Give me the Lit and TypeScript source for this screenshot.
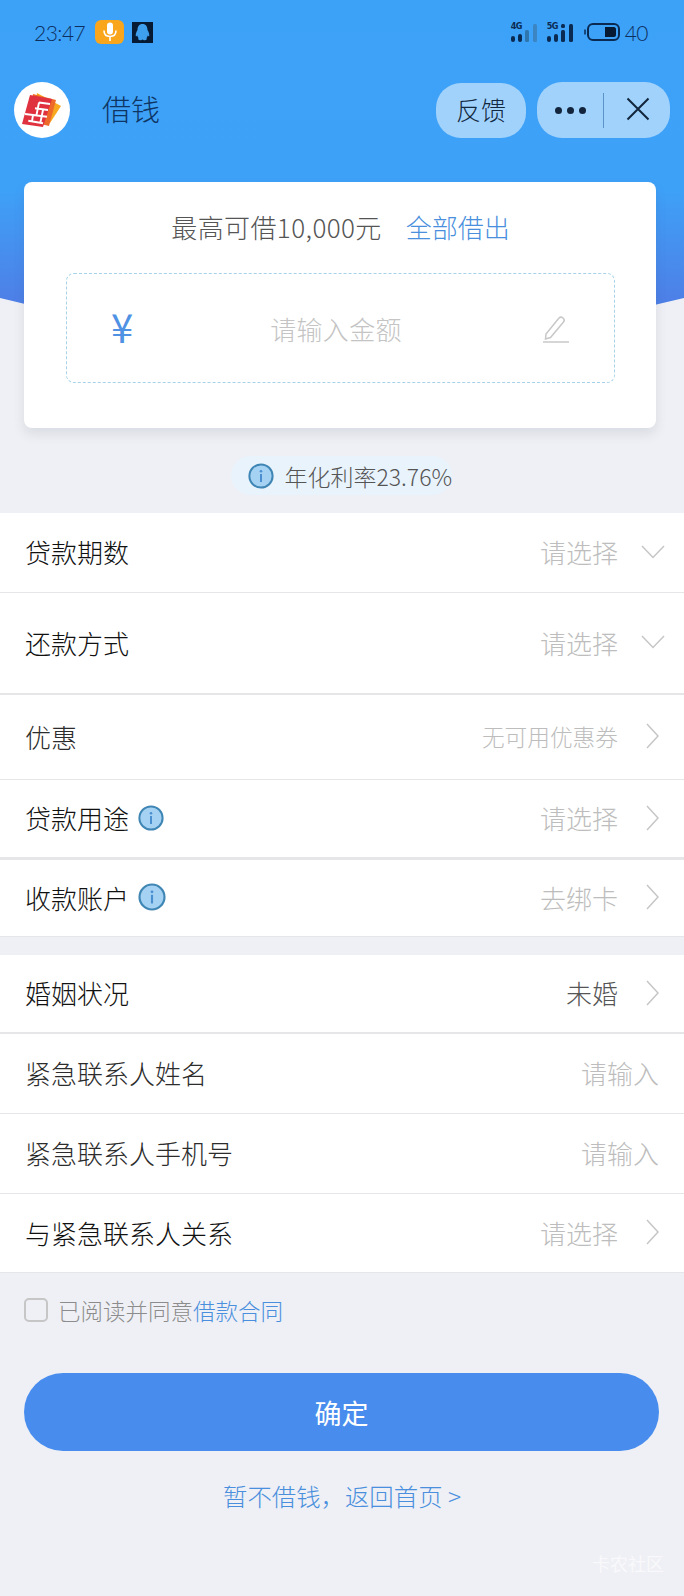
import { LitElement, html, css, svg } from 'lit'
import { customElement } from 'lit/decorators.js'

type Row = {
  label: string
  value?: string
  tone?: 'hint' | 'set'
  small?: boolean
  soft?: boolean
  info?: 'sm' | 'lg'
  icon?: 'down' | 'right'
  size: string
}

const loanRows: Row[] = [
  { label: '贷款期数', value: '请选择', icon: 'down', size: 'r80' },
  { label: '还款方式', value: '请选择', icon: 'down', size: 'r102' },
  { label: '优惠', value: '无可用优惠券', small: true, soft: true, icon: 'right', size: 'r85' },
  { label: '贷款用途', value: '请选择', info: 'sm', icon: 'right', size: 'r80 thick' },
  { label: '收款账户', value: '去绑卡', info: 'lg', icon: 'right', size: 'r77' },
]

const contactRows: Row[] = [
  { label: '婚姻状况', value: '未婚', tone: 'set', icon: 'right', size: 'r79 mid' },
  { label: '紧急联系人姓名', value: '请输入', size: 'r80', soft: true },
  { label: '紧急联系人手机号', value: '请输入', size: 'r80', soft: true },
  { label: '与紧急联系人关系', value: '请选择', icon: 'right', size: 'r79' },
]

const infoIcon = (size: number) => html`
  <svg class="info" width=${size} height=${size} viewBox="0 0 26 26">
    <circle cx="13" cy="13" r="11.6" fill="#a5d2f3" stroke="#3f86b5" stroke-width="2"></circle>
    <circle cx="13" cy="8.2" r="1.3" fill="#4a8fd0"></circle>
    <rect x="12" y="11" width="2" height="8" fill="#4a8fd0"></rect>
  </svg>
`

const signal = (bars: string[], dot: boolean) => svg`
  <rect x="0" y="12" width="4" height="6" rx="2" fill=${bars[0]}></rect>
  <rect x="7" y="10" width="4" height="8" rx="2" fill=${bars[1]}></rect>
  <rect x="14" y="6" width="4" height="12" rx="1.5" fill=${bars[2]}></rect>
  ${dot ? svg`<rect x="14" y="0" width="4" height="4" rx="1.5" fill=${bars[2]}></rect>` : ''}
  <rect x="22" y="0" width="4" height="18" rx="1.5" fill=${bars[3]}></rect>
`

@customElement('app-root')
export class AppRoot extends LitElement {
  static styles = css`
    :host {
      display: block;
      position: relative;
      min-height: 1596px;
      background: #eff0f5;
      overflow: hidden;
      font-family: 'Noto Sans CJK SC', 'Noto Sans', sans-serif;
      color: #333;
    }

    .hero-bg {
      position: absolute;
      left: 0;
      top: 0;
      width: 684px;
      height: 345px;
      background: linear-gradient(180deg, #3ca2f8 0, #3ea1f8 190px, #4f7de6 310px);
      clip-path: path('M0 0H684V298Q342 384 0 298Z');
    }

    .content {
      position: relative;
    }

    /* status bar */
    .status {
      height: 64px;
      display: flex;
      align-items: center;
      padding: 0 36px 0 34px;
      color: #0d2f5e;
    }
    .time {
      font: 300 21px Lato, sans-serif;
      letter-spacing: -0.5px;
      width: 61px;
    }
    .mic {
      width: 29px;
      height: 24px;
      border-radius: 6px;
      background: #faa61c;
      display: flex;
      align-items: center;
      justify-content: center;
    }
    .qq {
      width: 21px;
      height: 21px;
      margin-left: 8px;
      background: #061a33;
      display: flex;
      align-items: center;
      justify-content: center;
    }
    .spacer {
      flex: 1;
    }
    .net {
      position: relative;
      width: 26px;
      height: 20px;
      margin-right: 10px;
    }
    .net span {
      position: absolute;
      left: 0;
      top: -1px;
      font: 700 9px 'DejaVu Sans', sans-serif;
      font-stretch: condensed;
      letter-spacing: -0.5px;
      color: #0b2a52;
    }
    .net svg {
      position: absolute;
      left: 0;
      bottom: 0;
    }
    .battery {
      margin-left: 1px;
    }
    .level {
      font: 300 21px Lato, sans-serif;
      margin-left: 5px;
      letter-spacing: -0.5px;
    }

    /* mini program header */
    .nav {
      display: flex;
      align-items: center;
      padding: 18px 14px 44px;
    }
    .logo {
      width: 56px;
      height: 56px;
      border-radius: 50%;
      background: #fff;
      display: flex;
      align-items: center;
      justify-content: center;
    }
    .nav-title {
      margin-left: 32px;
      padding-bottom: 4px;
      font-size: 29px;
      font-weight: 300;
      color: #0e3563;
      flex: 1;
    }
    .feedback {
      width: 90px;
      height: 55px;
      box-sizing: border-box;
      padding-bottom: 2px;
      border-radius: 25px;
      background: #a1d2fb;
      font-size: 25px;
      font-weight: 300;
      color: #12283f;
      display: flex;
      align-items: center;
      justify-content: center;
    }
    .capsule {
      width: 133px;
      height: 56px;
      margin-left: 11px;
      border-radius: 25px;
      background: #a1d2fb;
      display: flex;
      align-items: center;
    }
    .dots {
      width: 66px;
      display: flex;
      justify-content: center;
      gap: 5px;
    }
    .dots i {
      width: 7px;
      height: 7px;
      border-radius: 50%;
      background: #12253c;
    }
    .divider {
      width: 1px;
      height: 35px;
      background: #5b93c6;
    }
    .close {
      flex: 1;
      display: flex;
      justify-content: center;
      padding-left: 2px;
      padding-bottom: 2px;
    }

    /* amount card */
    .card {
      margin: 0 28px 0 24px;
      height: 246px;
      box-sizing: border-box;
      background: #fff;
      border-radius: 8px;
      box-shadow: 0 6px 12px rgba(60, 70, 100, 0.12);
      padding: 22px 41px 0 42px;
    }
    .limit {
      display: flex;
      justify-content: center;
      gap: 24px;
      height: 46px;
      line-height: 46px;
      font-size: 26px;
      font-weight: 300;
      color: #555;
    }
    .limit span {
      letter-spacing: 0.4px;
    }
    .limit a {
      color: #4a8fdd;
    }
    .amount {
      margin-top: 23px;
      height: 110px;
      box-sizing: border-box;
      border: 1px dashed #a6d3ea;
      border-radius: 8px;
      display: flex;
      align-items: center;
      padding: 0 45px 0 44px;
    }
    .yen {
      width: 24px;
      font: 400 40px 'Noto Sans CJK SC', sans-serif;
      color: #4f92e4;
      line-height: 1;
      margin-top: -4px;
    }
    .amount-hint {
      flex: 1;
      text-align: center;
      font-size: 26px;
      font-weight: 300;
      letter-spacing: 0.3px;
      color: #c4c4c4;
      padding-right: 6px;
    }
    .pencil {
      margin-top: 2px;
    }

    /* rate */
    .rate-wrap {
      display: flex;
      justify-content: center;
      margin-top: 28px;
      margin-bottom: 18px;
    }
    .rate {
      height: 39px;
      width: 221px;
      margin-right: 2px;
      box-sizing: border-box;
      padding-left: 17px;
      border-radius: 20px;
      background: #e9f3fc;
      display: flex;
      align-items: center;
      gap: 11px;
      font-size: 23px;
      font-weight: 300;
      color: #555;
      white-space: nowrap;
    }
    .info {
      flex: none;
    }

    /* form rows */
    .group {
      background: #fff;
    }
    .group + .group {
      margin-top: 18px;
    }
    .row {
      display: flex;
      align-items: center;
      padding: 0 19px 2px 25px;
      box-sizing: border-box;
      border-bottom: 1px solid #e6e6e9;
    }
    .r80 { height: 80px; }
    .r102 { height: 102px; border-bottom-width: 2px; }
    .r85 { height: 85px; }
    .r77 { height: 77px; }
    .r79 { height: 79px; }
    .mid { border-bottom-width: 2px; }
    .thick { border-bottom-width: 3px; }
    .label {
      flex: 1;
      display: flex;
      align-items: center;
      gap: 9px;
      font-size: 26px;
      font-weight: 300;
      color: #111;
    }
    .label.soft {
      color: #2c2c2c;
    }
    .value {
      font-size: 26px;
      font-weight: 300;
      color: #bdbdbd;
    }
    .value.small {
      font-size: 22.7px;
    }
    .value.set {
      color: #555;
    }
    .no-icon {
      margin-right: 6px;
    }
    .chev-down {
      margin-left: 23px;
    }
    .chev-right {
      margin-left: 28px;
      margin-right: 6px;
    }

    /* agreement */
    .agree {
      display: flex;
      align-items: center;
      margin: 21px 0 0 24px;
      font-size: 22.5px;
      font-weight: 300;
      color: #8c8c8c;
    }
    .check {
      width: 24px;
      height: 24px;
      box-sizing: border-box;
      border: 2px solid #c6c6c6;
      border-radius: 5px;
      margin-right: 10px;
    }
    .agree a {
      color: #4a8fdd;
    }

    .confirm {
      margin: 47px 25px 0 24px;
      height: 78px;
      border-radius: 39px;
      background: #488dee;
      color: #fff;
      font-size: 27px;
      display: flex;
      align-items: center;
      justify-content: center;
    }
    .back {
      margin-top: 27px;
      text-align: center;
      font-size: 24.4px;
      font-weight: 300;
      color: #4a8fdd;
    }

    .mark {
      position: absolute;
      right: 20px;
      bottom: 20px;
      font-size: 18px;
      color: #f9f9fb;
    }
  `

  private chevron(kind?: 'down' | 'right') {
    if (kind === 'down') {
      return html`<svg class="chev-down" width="24" height="14" viewBox="0 0 24 14" fill="none">
        <path d="M1 1L12 12.5L23 1" stroke="#c6c6c6" stroke-width="1.5"></path>
      </svg>`
    }
    if (kind === 'right') {
      return html`<svg class="chev-right" width="13" height="26" viewBox="0 0 13 26" fill="none">
        <path d="M1 1L12 13L1 25" stroke="#c6c6c6" stroke-width="1.5"></path>
      </svg>`
    }
    return html``
  }

  private renderRow(row: Row) {
    const valueCls = ['value', row.small ? 'small' : '', row.tone === 'set' ? 'set' : '', row.icon ? '' : 'no-icon'].join(' ')
    return html`
      <div class="row ${row.size}">
        <div class="label ${row.soft ? 'soft' : ''}">
          ${row.label}
          ${row.info ? infoIcon(row.info === 'sm' ? 26 : 28) : ''}
        </div>
        <div class=${valueCls}>${row.value}</div>
        ${this.chevron(row.icon)}
      </div>
    `
  }

  render() {
    return html`
      <div class="hero-bg"></div>
      <div class="content">
        <div class="status">
          <div class="time">23:47</div>
          <div class="mic">
            <svg width="16" height="20" viewBox="0 0 16 20" fill="none">
              <rect x="5" y="0.5" width="6" height="12" rx="3" fill="#fff"></rect>
              <path d="M2 8.5C2 12.5 4.5 14.5 8 14.5C11.5 14.5 14 12.5 14 8.5M8 14.5V19" stroke="#fff" stroke-width="1.6"></path>
            </svg>
          </div>
          <div class="qq">
            <svg width="15" height="17" viewBox="0 0 15 17">
              <path d="M7.5 0C11 0 12.5 2.7 12.5 6C14 8.5 14.8 11 14 12.5L12.7 11.5C12.5 12.8 12 13.5 11.5 14C12.3 15 11.5 16.5 9 16.2L7.5 15.5L6 16.2C3.5 16.5 2.7 15 3.5 14C3 13.5 2.5 12.8 2.3 11.5L1 12.5C0.2 11 1 8.5 2.5 6C2.5 2.7 4 0 7.5 0Z" fill="#3f9fef"></path>
            </svg>
          </div>
          <div class="spacer"></div>
          <div class="net">
            <span>4G</span>
            <svg width="26" height="18" viewBox="0 0 26 18">${signal(['#0b2a52', '#0b2a52', '#2f75ae', '#3a85c2'], false)}</svg>
          </div>
          <div class="net">
            <span>5G</span>
            <svg width="26" height="18" viewBox="0 0 26 18">${signal(['#0b2a52', '#0b2a52', '#0b2a52', '#0b2a52'], true)}</svg>
          </div>
          <svg class="battery" width="36" height="18" viewBox="0 0 36 18" fill="none">
            <path d="M1 6.5V11.5" stroke="#0b2a52" stroke-width="1.5"></path>
            <rect x="4" y="1" width="31" height="16" rx="5" stroke="#0b2a52" stroke-width="2"></rect>
            <path d="M21 4H30C31 4 32 5 32 6V12C32 13 31 14 30 14H21Z" fill="#061a33"></path>
          </svg>
          <div class="level">40</div>
        </div>

        <div class="nav">
          <div class="logo">
            <svg width="40" height="38" viewBox="0 0 40 38">
              <path d="M15 2L39 15L28 32L12 26Z" fill="#f7a81f"></path>
              <path d="M11 3L34 9L27 35L6 30Z" fill="#ee6a2a"></path>
              <path d="M8 4L30 8L21 36L0 33Z" fill="#e0313f"></path>
              <path d="M17 11.5L28 13M13 17.3L26 19M3 23L25 25.7M6.3 29.7L21 32.3M17 11.5L14.5 24M21 19L18.5 31M11 24L10 30.5" stroke="#fff" stroke-width="1.9" fill="none"></path>
            </svg>
          </div>
          <div class="nav-title">借钱</div>
          <div class="feedback">反馈</div>
          <div class="capsule">
            <div class="dots"><i></i><i></i><i></i></div>
            <div class="divider"></div>
            <div class="close">
              <svg width="24" height="24" viewBox="0 0 24 24" fill="none">
                <path d="M1.5 1.5L22.5 22.5M22.5 1.5L1.5 22.5" stroke="#12253c" stroke-width="2"></path>
              </svg>
            </div>
          </div>
        </div>

        <div class="card">
          <div class="limit">
            <span>最高可借10,000元</span>
            <a>全部借出</a>
          </div>
          <div class="amount">
            <div class="yen">¥</div>
            <div class="amount-hint">请输入金额</div>
            <svg class="pencil" width="26" height="28" viewBox="0 0 26 28" fill="none">
              <path d="M3 19L16 3C17 2 18.5 1.8 20 3C21.5 4.2 21.5 5.7 20.5 7L7.5 22.5L2.5 24Z" stroke="#c8c8c8" stroke-width="1.5"></path>
              <path d="M0 27H26" stroke="#c8c8c8" stroke-width="1.5"></path>
            </svg>
          </div>
        </div>

        <div class="rate-wrap">
          <div class="rate">${infoIcon(26)}<span>年化利率23.76%</span></div>
        </div>

        <div class="group">${loanRows.map((r) => this.renderRow(r))}</div>
        <div class="group">${contactRows.map((r) => this.renderRow(r))}</div>

        <div class="agree">
          <div class="check"></div>
          <span>已阅读并同意<a>借款合同</a></span>
        </div>
        <div class="confirm">确定</div>
        <div class="back">暂不借钱，返回首页 &gt;</div>
      </div>
      <div class="mark">卡农社区</div>
    `
  }
}
